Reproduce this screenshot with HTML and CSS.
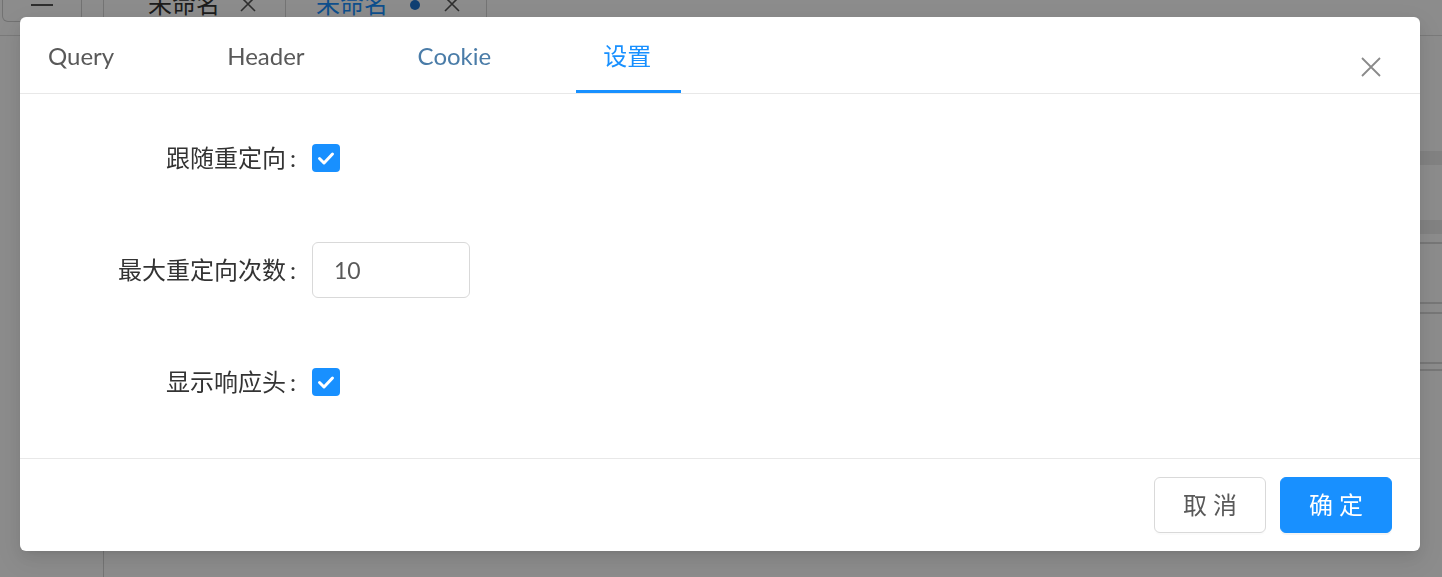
FILE: index.html
```html
<!DOCTYPE html>
<html lang="zh-CN">
<head>
<meta charset="utf-8">
<title>设置</title>
<link rel="stylesheet" href="styles.css">
</head>
<body>
<div class="app">
  <div class="topbar">
    <div class="menu-btn"><span class="burger"></span></div>
    <div class="doc-tab"><span class="doc-name">未命名</span><svg class="doc-x" viewBox="0 0 16 16" width="16" height="16"><path d="M1 1 L15 15 M15 1 L1 15" stroke="#555" stroke-width="1.6" fill="none"/></svg></div>
    <div class="doc-tab active"><span class="doc-name">未命名</span><span class="doc-dot"></span><svg class="doc-x" viewBox="0 0 16 16" width="16" height="16"><path d="M1 1 L15 15 M15 1 L1 15" stroke="#555" stroke-width="1.6" fill="none"/></svg></div>
  </div>
  <div class="main">
    <div class="sidebar"></div>
    <div class="content">
      <div class="bg-row gap-a"></div>
      <div class="bg-band"></div>
      <div class="bg-row gap-b"></div>
      <div class="bg-band"></div>
      <div class="bg-row gap-c"></div>
      <div class="bg-line"></div>
      <div class="bg-row gap-d"></div>
      <div class="bg-line"></div>
      <div class="bg-row gap-e"></div>
      <div class="bg-line"></div>
      <div class="bg-row gap-f"></div>
      <div class="bg-line"></div>
      <div class="bg-row gap-g"></div>
      <div class="bg-line"></div>
    </div>
  </div>
</div>

<div class="mask"></div>

<div class="modal">
  <div class="modal-header">
    <div class="tabs">
      <div class="tab">Query</div>
      <div class="tab">Header</div>
      <div class="tab hover">Cookie</div>
      <div class="tab active">设置</div>
    </div>
    <button class="close" aria-label="close">
      <svg viewBox="0 0 20 20" width="20" height="20"><path d="M1 1 L19 19 M19 1 L1 19" stroke="#8a8a8a" stroke-width="1.8" fill="none"/></svg>
    </button>
  </div>
  <div class="modal-body">
    <div class="form-row">
      <label class="form-label">跟随重定向</label>
      <span class="checkbox"><svg viewBox="0 0 28 28" width="28" height="28"><path d="M7.5 14.5 L12 19 L20.5 10" stroke="#fff" stroke-width="3" fill="none" stroke-linecap="round" stroke-linejoin="round"/></svg></span>
    </div>
    <div class="form-row">
      <label class="form-label">最大重定向次数</label>
      <div class="input">10</div>
    </div>
    <div class="form-row">
      <label class="form-label">显示响应头</label>
      <span class="checkbox"><svg viewBox="0 0 28 28" width="28" height="28"><path d="M7.5 14.5 L12 19 L20.5 10" stroke="#fff" stroke-width="3" fill="none" stroke-linecap="round" stroke-linejoin="round"/></svg></span>
    </div>
  </div>
  <div class="modal-footer">
    <button class="btn">取 消</button>
    <button class="btn primary">确 定</button>
  </div>
</div>
</body>
</html>
```

FILE: styles.css
```css
* { box-sizing: border-box; }
html, body {
  margin: 0;
  padding: 0;
  width: 1442px;
  height: 577px;
  overflow: hidden;
  background: #fff;
  font-family: Lato, "Noto Sans CJK SC", sans-serif;
}

/* background app */
.app { display: flex; flex-direction: column; height: 577px; }
.topbar {
  height: 36px;
  border-bottom: 1px solid #dedede;
  display: flex;
  align-items: flex-start;
}
.menu-btn {
  margin-left: 2px;
  width: 80px;
  height: 22px;
  border: 1px solid #cfcfcf;
  border-top: none;
  border-radius: 0 0 6px 6px;
  display: flex;
  justify-content: center;
}
.burger {
  display: block;
  width: 22px;
  height: 2px;
  margin-top: 4px;
  background: #555;
}
.doc-tab {
  margin-left: 21px;
  width: 182px;
  height: 22px;
  border-left: 1px solid #d4d4d4;
  display: flex;
  align-items: center;
  padding-left: 44px;
  font-size: 24px;
  color: #333;
  line-height: 1;
}
.doc-tab.active {
  margin-left: 0;
  width: 202px;
  border-right: 1px solid #d4d4d4;
  padding-left: 30px;
  color: #1890ff;
}
.doc-name { margin-top: -14px; }
.doc-x { margin-left: 20px; margin-top: -14px; }
.doc-tab.active .doc-x { margin-left: 24px; }
.doc-dot {
  width: 10px; height: 10px; border-radius: 50%;
  background: #1a73d0; margin-left: 22px; margin-top: -13px;
}
.main { flex: 1; display: flex; }
.sidebar { width: 104px; border-right: 1px solid #d4d4d4; }
.content { flex: 1; display: flex; flex-direction: column; }
.bg-row.gap-a { height: 115px; }
.bg-band { height: 14px; background: #ececec; }
.bg-row.gap-b { height: 55px; }
.bg-row.gap-c { height: 8px; }
.bg-row.gap-d { height: 58px; }
.bg-row.gap-e { height: 8px; }
.bg-row.gap-f { height: 48px; }
.bg-row.gap-g { height: 5px; }
.bg-line { height: 2px; background: #d9d9d9; }

.mask {
  position: fixed;
  inset: 0;
  background: rgba(0, 0, 0, 0.45);
}

/* modal */
.modal {
  position: fixed;
  left: 20px;
  top: 17px;
  width: 1400px;
  height: 534px;
  background: #fff;
  border-radius: 6px;
  box-shadow: 0 6px 16px rgba(0,0,0,0.08), 0 3px 6px -4px rgba(0,0,0,0.12), 0 9px 28px 8px rgba(0,0,0,0.05);
  display: flex;
  flex-direction: column;
}
.modal-header {
  position: relative;
  height: 77px;
  border-bottom: 1px solid #e8e8e8;
  display: flex;
}
.tabs { display: flex; gap: 57px; }
.tab {
  position: relative;
  padding: 2px 28px 0 28px;
  display: flex;
  align-items: center;
  font-size: 24px;
  color: #595959;
  line-height: 1;
}
.tab.hover { color: #4a7ca8; }
.tab.active { color: #1890ff; padding-right: 30px; padding-left: 27px; }
.tab.active::after {
  content: "";
  position: absolute;
  left: 0;
  right: 0;
  bottom: 0;
  height: 3px;
  background: #1890ff;
}
.close {
  position: absolute;
  right: 39px;
  top: 40px;
  width: 20px;
  height: 20px;
  padding: 0;
  border: none;
  background: none;
  display: flex;
}

.modal-body {
  height: 364px;
  padding-top: 36px;
  display: flex;
  flex-direction: column;
  gap: 56px;
}
.form-row {
  height: 56px;
  display: flex;
  align-items: center;
}
.form-label {
  width: 276px;
  text-align: right;
  font-size: 24px;
  color: #333;
  line-height: 1;
}
.form-label::after {
  content: ":";
  margin-left: 4px;
}
.checkbox {
  margin-left: 16px;
  width: 28px;
  height: 28px;
  border-radius: 4px;
  background: #1890ff;
  display: flex;
}
.input {
  margin-left: 16px;
  width: 158px;
  height: 56px;
  border: 1px solid #d9d9d9;
  border-radius: 6px;
  padding-left: 21px;
  display: flex;
  align-items: center;
  font-size: 23px;
  color: #595959;
}

.modal-footer {
  border-top: 1px solid #e8e8e8;
  padding: 18px 28px;
  display: flex;
  justify-content: flex-end;
  gap: 14px;
}
.btn {
  width: 112px;
  height: 56px;
  border: 1px solid #d9d9d9;
  border-radius: 6px;
  background: #fff;
  color: #595959;
  font-family: Lato, "Noto Sans CJK SC", sans-serif;
  font-size: 24px;
  line-height: 1;
  padding: 0;
  box-shadow: 0 2px 0 rgba(0,0,0,0.015);
}
.btn.primary {
  background: #1890ff;
  border-color: #1890ff;
  color: #fff;
  box-shadow: 0 2px 0 rgba(0,0,0,0.045);
}
```
